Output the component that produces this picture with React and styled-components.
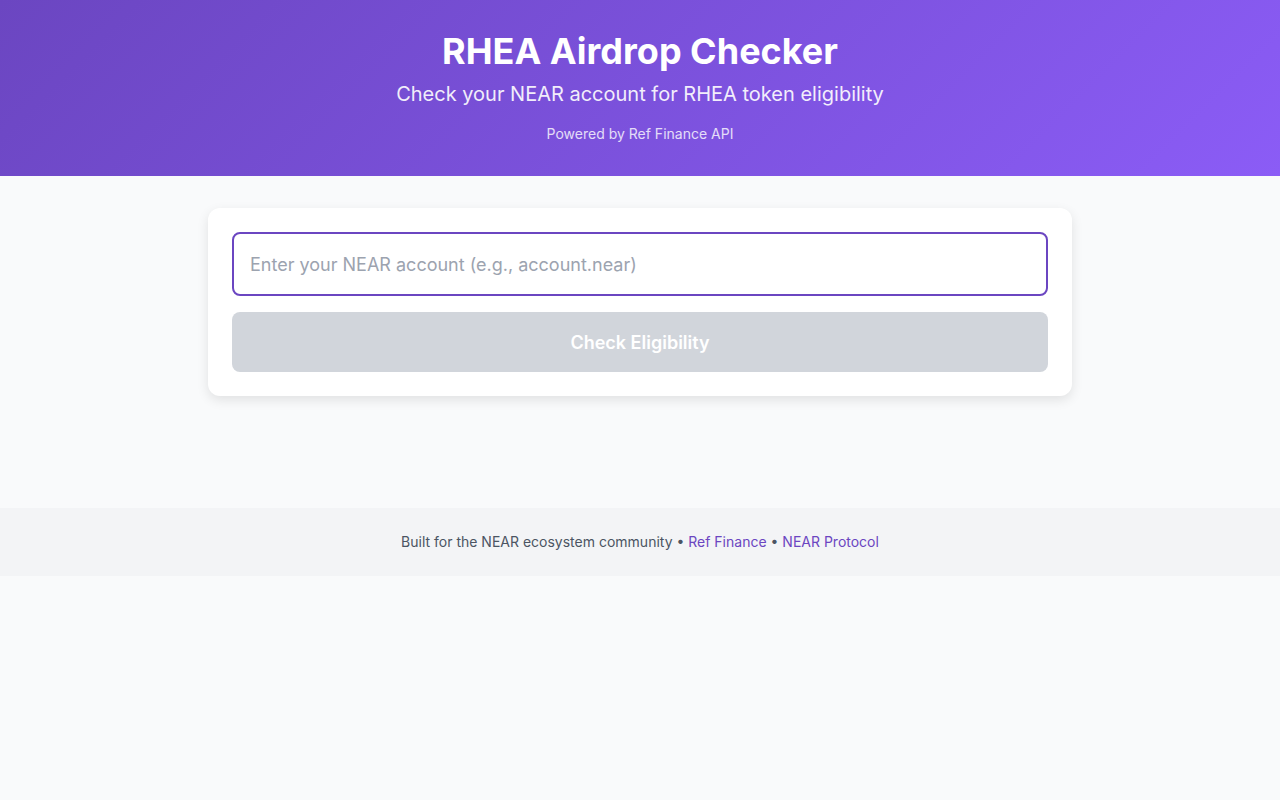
import styled, { createGlobalStyle } from 'styled-components';
import { useState } from 'react';

const GlobalStyle = createGlobalStyle`
  * {
    box-sizing: border-box;
  }

  body {
    margin: 0;
    background: #f9fafb;
    font-family: Inter, "Noto Sans", sans-serif;
    color: #1f2937;
  }
`;

export default function App() {
  const [account, setAccount] = useState('');

  return (
    <>
      <GlobalStyle />
      <Header>
        <Title>RHEA Airdrop Checker</Title>
        <Subtitle>Check your NEAR account for RHEA token eligibility</Subtitle>
        <Powered>Powered by Ref Finance API</Powered>
      </Header>
      <Main>
        <Card>
          <Input
            autoFocus
            type="text"
            placeholder="Enter your NEAR account (e.g., account.near)"
            value={account}
            onChange={(event) => setAccount(event.target.value)}
          />
          <CheckButton disabled={!account.trim()}>Check Eligibility</CheckButton>
        </Card>
      </Main>
      <Footer>
        Built for the NEAR ecosystem community •{' '}
        <FooterLink href="#">Ref Finance</FooterLink> •{' '}
        <FooterLink href="#">NEAR Protocol</FooterLink>
      </Footer>
    </>
  );
}

const Header = styled.header`
  display: flex;
  flex-direction: column;
  align-items: center;
  padding: 32px 16px 32px;
  background: linear-gradient(135deg, #6b46c1 0%, #8b5cf6 100%);
  color: white;
  text-align: center;
`;

const Title = styled.h1`
  margin: 0;
  font-size: 36px;
  line-height: 38px;
  font-weight: 700;
`;

const Subtitle = styled.p`
  margin: 9px 0 0;
  font-size: 20px;
  line-height: 30px;
  opacity: 0.9;
`;

const Powered = styled.p`
  margin: 14px 0 0;
  font-size: 14px;
  line-height: 21px;
  opacity: 0.8;
`;

const Main = styled.main`
  padding: 32px 16px 112px;
`;

const Card = styled.div`
  display: flex;
  flex-direction: column;
  gap: 16px;
  max-width: 864px;
  margin: 0 auto;
  padding: 24px;
  background: white;
  border-radius: 12px;
  box-shadow: 0 4px 12px rgba(0, 0, 0, 0.1);
`;

const Input = styled.input`
  width: 100%;
  height: 64px;
  padding: 0 16px;
  border: 2px solid #6b46c1;
  border-radius: 8px;
  font-family: inherit;
  font-size: 18px;
  color: #1f2937;
  outline: none;

  &::placeholder {
    color: #9ca3af;
  }
`;

const CheckButton = styled.button`
  height: 60px;
  border: none;
  border-radius: 8px;
  background: ${(props) => (props.disabled ? '#d1d5db' : '#6b46c1')};
  color: white;
  font-family: inherit;
  font-size: 18px;
  font-weight: 600;
  cursor: ${(props) => (props.disabled ? 'not-allowed' : 'pointer')};
`;

const Footer = styled.footer`
  padding: 24px 16px;
  background: #f3f4f6;
  color: #4b5563;
  font-size: 14px;
  line-height: 20px;
  text-align: center;
`;

const FooterLink = styled.a`
  color: #6b46c1;
  text-decoration: none;
`;
